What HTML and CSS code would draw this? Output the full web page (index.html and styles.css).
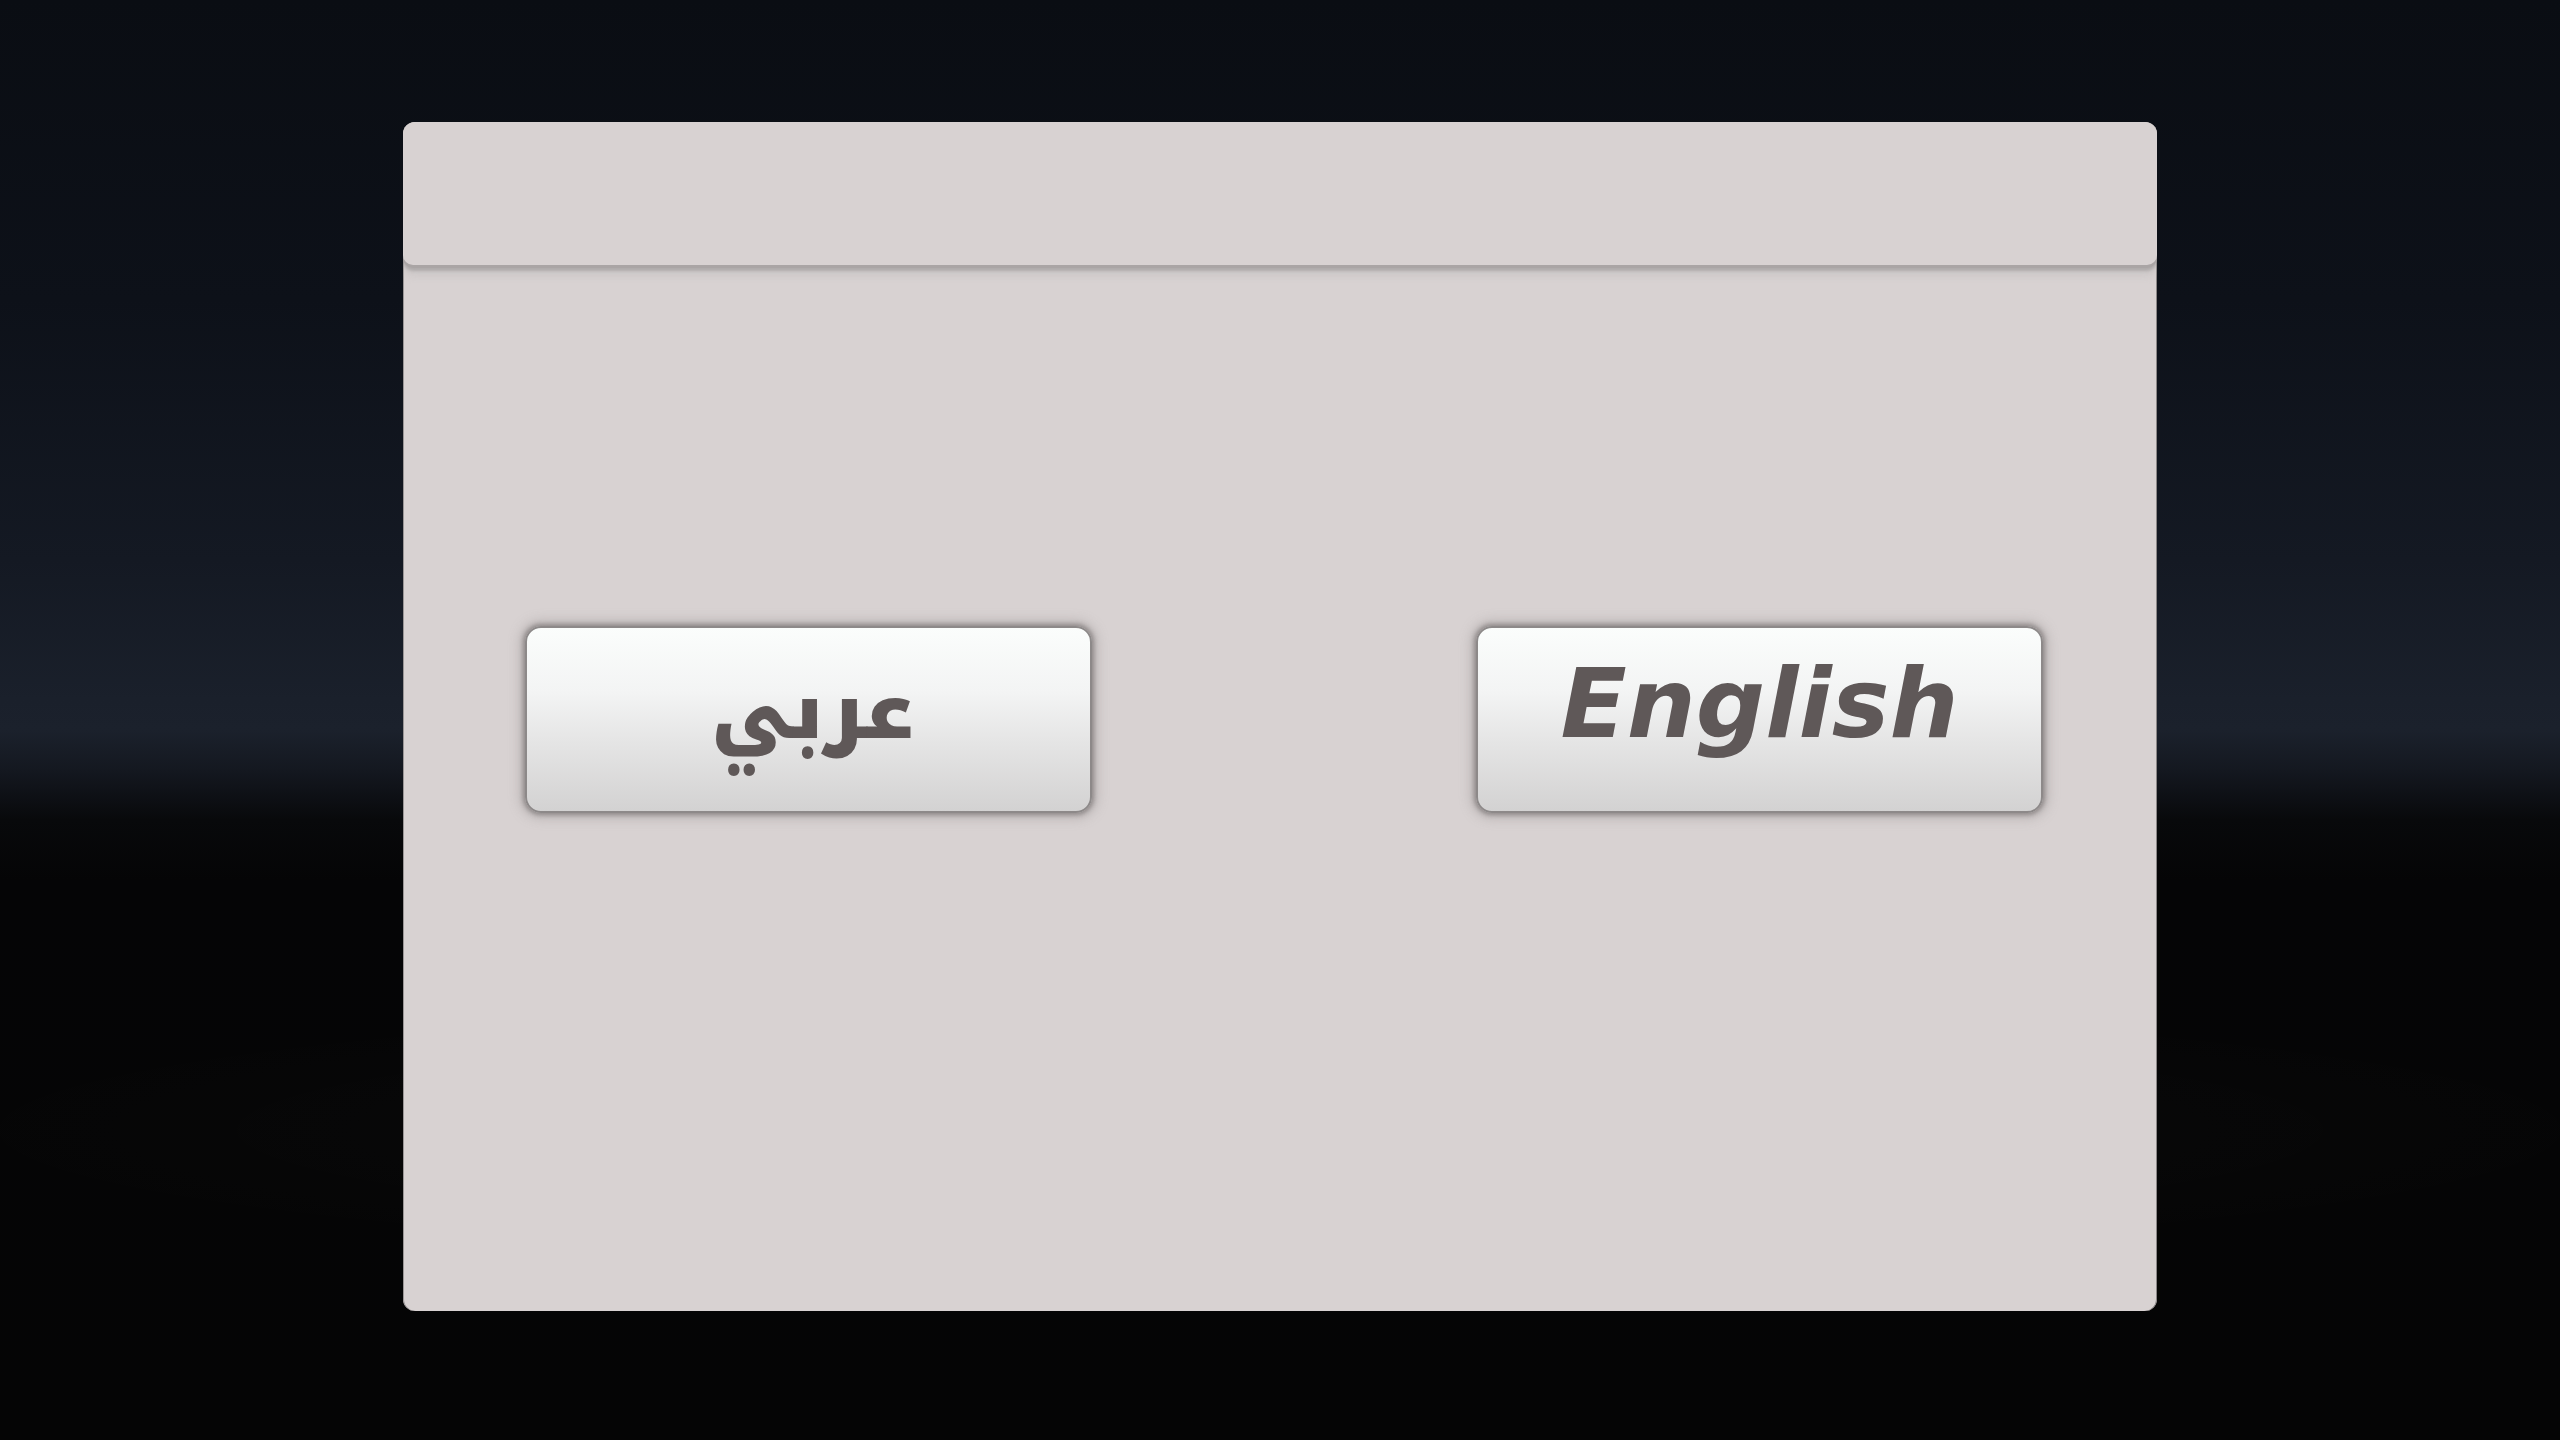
FILE: index.html
```html
<!DOCTYPE html>
<html lang="en">
<head>
<meta charset="utf-8">
<title>Language</title>
<link rel="stylesheet" href="styles.css">
</head>
<body>
<div class="stage">
  <div class="panel">
    <div class="panel-header"></div>
    <div class="panel-body">
      <button class="lang-btn lang-ar" lang="ar" dir="rtl">عربي</button>
      <button class="lang-btn lang-en">English</button>
    </div>
  </div>
</div>
</body>
</html>
```
FILE: styles.css
```css
html, body {
  margin: 0;
  padding: 0;
  height: 100%;
}
body {
  background:
    radial-gradient(ellipse 1400px 140px at 50% 1130px, rgba(255,255,255,0.025), rgba(255,255,255,0) 100%),
    linear-gradient(to bottom,
      #0a0d13 0px,
      #0d1119 300px,
      #141923 560px,
      #1a202b 700px,
      #1b212c 730px,
      #141820 770px,
      #08090b 820px,
      #050506 880px,
      #050505 1440px);
  font-family: "DejaVu Sans", "Noto Sans", sans-serif;
}
.stage {
  height: 1440px;
  padding-top: 122px;
  box-sizing: border-box;
  display: flex;
  justify-content: flex-start;
  padding-left: 403px;
}
.panel {
  width: 1754px;
  height: 1189px;
  background: #d8d2d2;
  border-radius: 12px;
  display: flex;
  flex-direction: column;
  overflow: hidden;
  box-shadow: inset -1px 0 0 #8a8686, inset 1px 0 0 #9a9696;
}
.panel-header {
  height: 143px;
  flex: none;
  background: #d8d2d2;
  border-radius: 0 0 10px 10px;
  box-shadow: 0 3px 0 #aaa5a5, 0 6px 3px rgba(150,145,145,0.55), 0 12px 6px rgba(190,185,185,0.35);
  position: relative;
  z-index: 1;
}
.panel-body {
  flex: 1;
  display: flex;
  justify-content: center;
  align-items: flex-start;
  gap: 384px;
  padding-top: 361px;
  padding-left: 8px;
}
.lang-btn {
  width: 567px;
  height: 187px;
  box-sizing: border-box;
  border: 2px solid #8d8989;
  border-radius: 16px;
  background: linear-gradient(to bottom, #fbfdfc 0%, #f3f4f4 35%, #e6e6e6 60%, #d3d2d2 100%);
  box-shadow: 0 0 4px 2px rgba(120,114,114,0.65), 0 0 12px 5px rgba(140,134,134,0.4);
  color: #5f5858;
  font-family: "DejaVu Sans", "Noto Sans", sans-serif;
  font-weight: bold;
  padding: 0;
  margin: 0;
  display: flex;
  align-items: center;
  justify-content: center;
}
.lang-ar {
  font-family: "Noto Kufi Arabic", "DejaVu Sans", sans-serif;
  font-weight: 900;
  font-size: 78px;
  line-height: 1;
  padding-bottom: 16px;
  padding-left: 8px;
}
.lang-en {
  font-style: oblique;
  font-size: 97px;
  line-height: 1;
  padding-bottom: 32px;
}
```
